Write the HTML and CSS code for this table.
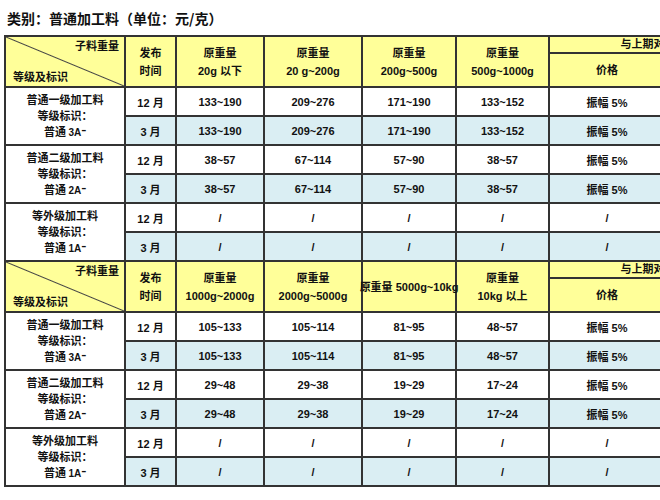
FILE: index.html
```html
<!DOCTYPE html>
<html lang="zh">
<head>
<meta charset="utf-8">
<title>普通加工料</title>
<link rel="stylesheet" href="styles.css">
</head>
<body>
<div class="title">类别：普通加工料（单位：元/克）</div>
<table class="price">
  <colgroup>
    <col class="c1"><col class="c2"><col class="c3"><col class="c4"><col class="c5"><col class="c6"><col class="c7"><col class="c8">
  </colgroup>
  <tbody>
    <tr class="h1">
      <td rowspan="2" class="diag"><div class="diag-in"><span class="tr">子料重量</span><span class="bl">等级及标识</span></div></td>
      <td rowspan="2" class="hd">发布<br>时间</td>
      <td rowspan="2" class="hd">原重量<br>20g 以下</td>
      <td rowspan="2" class="hd">原重量<br>20 g~200g</td>
      <td rowspan="2" class="hd">原重量<br>200g~500g</td>
      <td rowspan="2" class="hd">原重量<br>500g~1000g</td>
      <td colspan="2" class="hd cmp"><span>与上期对比</span></td>
    </tr>
    <tr class="h2">
      <td class="hd">价格</td>
      <td class="hd"></td>
    </tr>

    <tr class="d"><td rowspan="2" class="grade">普通一级加工料<br>等级标识：<br>普通 <span class="lat">3A<span class="mn">-</span></span></td><td>12 月</td><td>133~190</td><td>209~276</td><td>171~190</td><td>133~152</td><td>振幅 5%</td><td></td></tr>
    <tr class="d b"><td>3 月</td><td>133~190</td><td>209~276</td><td>171~190</td><td>133~152</td><td>振幅 5%</td><td></td></tr>
    <tr class="d"><td rowspan="2" class="grade">普通二级加工料<br>等级标识：<br>普通 <span class="lat">2A<span class="mn">-</span></span></td><td>12 月</td><td>38~57</td><td>67~114</td><td>57~90</td><td>38~57</td><td>振幅 5%</td><td></td></tr>
    <tr class="d b"><td>3 月</td><td>38~57</td><td>67~114</td><td>57~90</td><td>38~57</td><td>振幅 5%</td><td></td></tr>
    <tr class="d"><td rowspan="2" class="grade">等外级加工料<br>等级标识：<br>普通 <span class="lat">1A<span class="mn">-</span></span></td><td>12 月</td><td>/</td><td>/</td><td>/</td><td>/</td><td>/</td><td></td></tr>
    <tr class="d b"><td>3 月</td><td>/</td><td>/</td><td>/</td><td>/</td><td>/</td><td></td></tr>

    <tr class="h1">
      <td rowspan="2" class="diag"><div class="diag-in"><span class="tr">子料重量</span><span class="bl">等级及标识</span></div></td>
      <td rowspan="2" class="hd">发布<br>时间</td>
      <td rowspan="2" class="hd">原重量<br>1000g~2000g</td>
      <td rowspan="2" class="hd">原重量<br>2000g~5000g</td>
      <td rowspan="2" class="hd"><span class="nowrap">原重量 5000g~10kg</span></td>
      <td rowspan="2" class="hd">原重量<br>10kg 以上</td>
      <td colspan="2" class="hd cmp"><span>与上期对比</span></td>
    </tr>
    <tr class="h2">
      <td class="hd">价格</td>
      <td class="hd"></td>
    </tr>

    <tr class="d"><td rowspan="2" class="grade">普通一级加工料<br>等级标识：<br>普通 <span class="lat">3A<span class="mn">-</span></span></td><td>12 月</td><td>105~133</td><td>105~114</td><td>81~95</td><td>48~57</td><td>振幅 5%</td><td></td></tr>
    <tr class="d b"><td>3 月</td><td>105~133</td><td>105~114</td><td>81~95</td><td>48~57</td><td>振幅 5%</td><td></td></tr>
    <tr class="d"><td rowspan="2" class="grade">普通二级加工料<br>等级标识：<br>普通 <span class="lat">2A<span class="mn">-</span></span></td><td>12 月</td><td>29~48</td><td>29~38</td><td>19~29</td><td>17~24</td><td>振幅 5%</td><td></td></tr>
    <tr class="d b"><td>3 月</td><td>29~48</td><td>29~38</td><td>19~29</td><td>17~24</td><td>振幅 5%</td><td></td></tr>
    <tr class="d"><td rowspan="2" class="grade">等外级加工料<br>等级标识：<br>普通 <span class="lat">1A<span class="mn">-</span></span></td><td>12 月</td><td>/</td><td>/</td><td>/</td><td>/</td><td>/</td><td></td></tr>
    <tr class="d b"><td>3 月</td><td>/</td><td>/</td><td>/</td><td>/</td><td>/</td><td></td></tr>
  </tbody>
</table>
</body>
</html>
```

FILE: styles.css
```css
html, body {
  overflow: hidden;
}
body {
  margin: 0;
  padding: 8px 0 0 4px;
  background: #ffffff;
  color: #111111;
  font-family: "Liberation Sans", "Noto Sans CJK SC", sans-serif;
}
.title {
  font-family: "Noto Sans CJK SC", sans-serif;
  font-size: 14px;
  font-weight: bold;
  line-height: 20px;
  height: 20px;
  margin: 0 0 7px 3px;
  color: #111;
}
.price {
  border-collapse: collapse;
  table-layout: fixed;
  width: 742px;
  font-size: 11px;
  font-weight: bold;
}
.c1 { width: 120px; }
.c2 { width: 51px; }
.c3 { width: 88px; }
.c4 { width: 98px; }
.c5 { width: 94px; }
.c6 { width: 93px; }
.c7 { width: 116px; }
.c8 { width: 82px; }
.price td {
  border: 2px solid #333;
  padding: 0;
  text-align: center;
  vertical-align: middle;
  background: #ffffff;
  white-space: nowrap;
}
.h1 { height: 17px; }
.h2 { height: 34px; }
.d { height: 29px; }
.price .hd {
  background: #ffff99;
  line-height: 18px;
}
.price .b td {
  background: #daeef3;
}
.price .grade {
  background: #ffffff;
  line-height: 16px;
  font-family: "Noto Sans CJK SC", sans-serif;
}
.lat {
  font-family: "Liberation Sans", sans-serif;
  font-size: 10px;
}
.mn {
  display: inline-block;
  font-size: 11px;
  transform: translateY(-3px) scaleX(1.4);
  margin-left: 1px;
}
.price .diag {
  background: linear-gradient(to top right, #ffff99 calc(50% - 1px), #444 50%, #ffff99 calc(50% + 1px));
  vertical-align: top;
}
.diag-in {
  display: flex;
  flex-direction: column;
  justify-content: space-between;
  height: 47px;
  padding: 1px 5px 0 7px;
}
.tr { text-align: right; line-height: 16px; }
.bl { text-align: left; line-height: 16px; }
.cmp span {
  display: block;
  line-height: 15px;
}
.nowrap {
  display: block;
  margin: 0 -6px;
}
```
